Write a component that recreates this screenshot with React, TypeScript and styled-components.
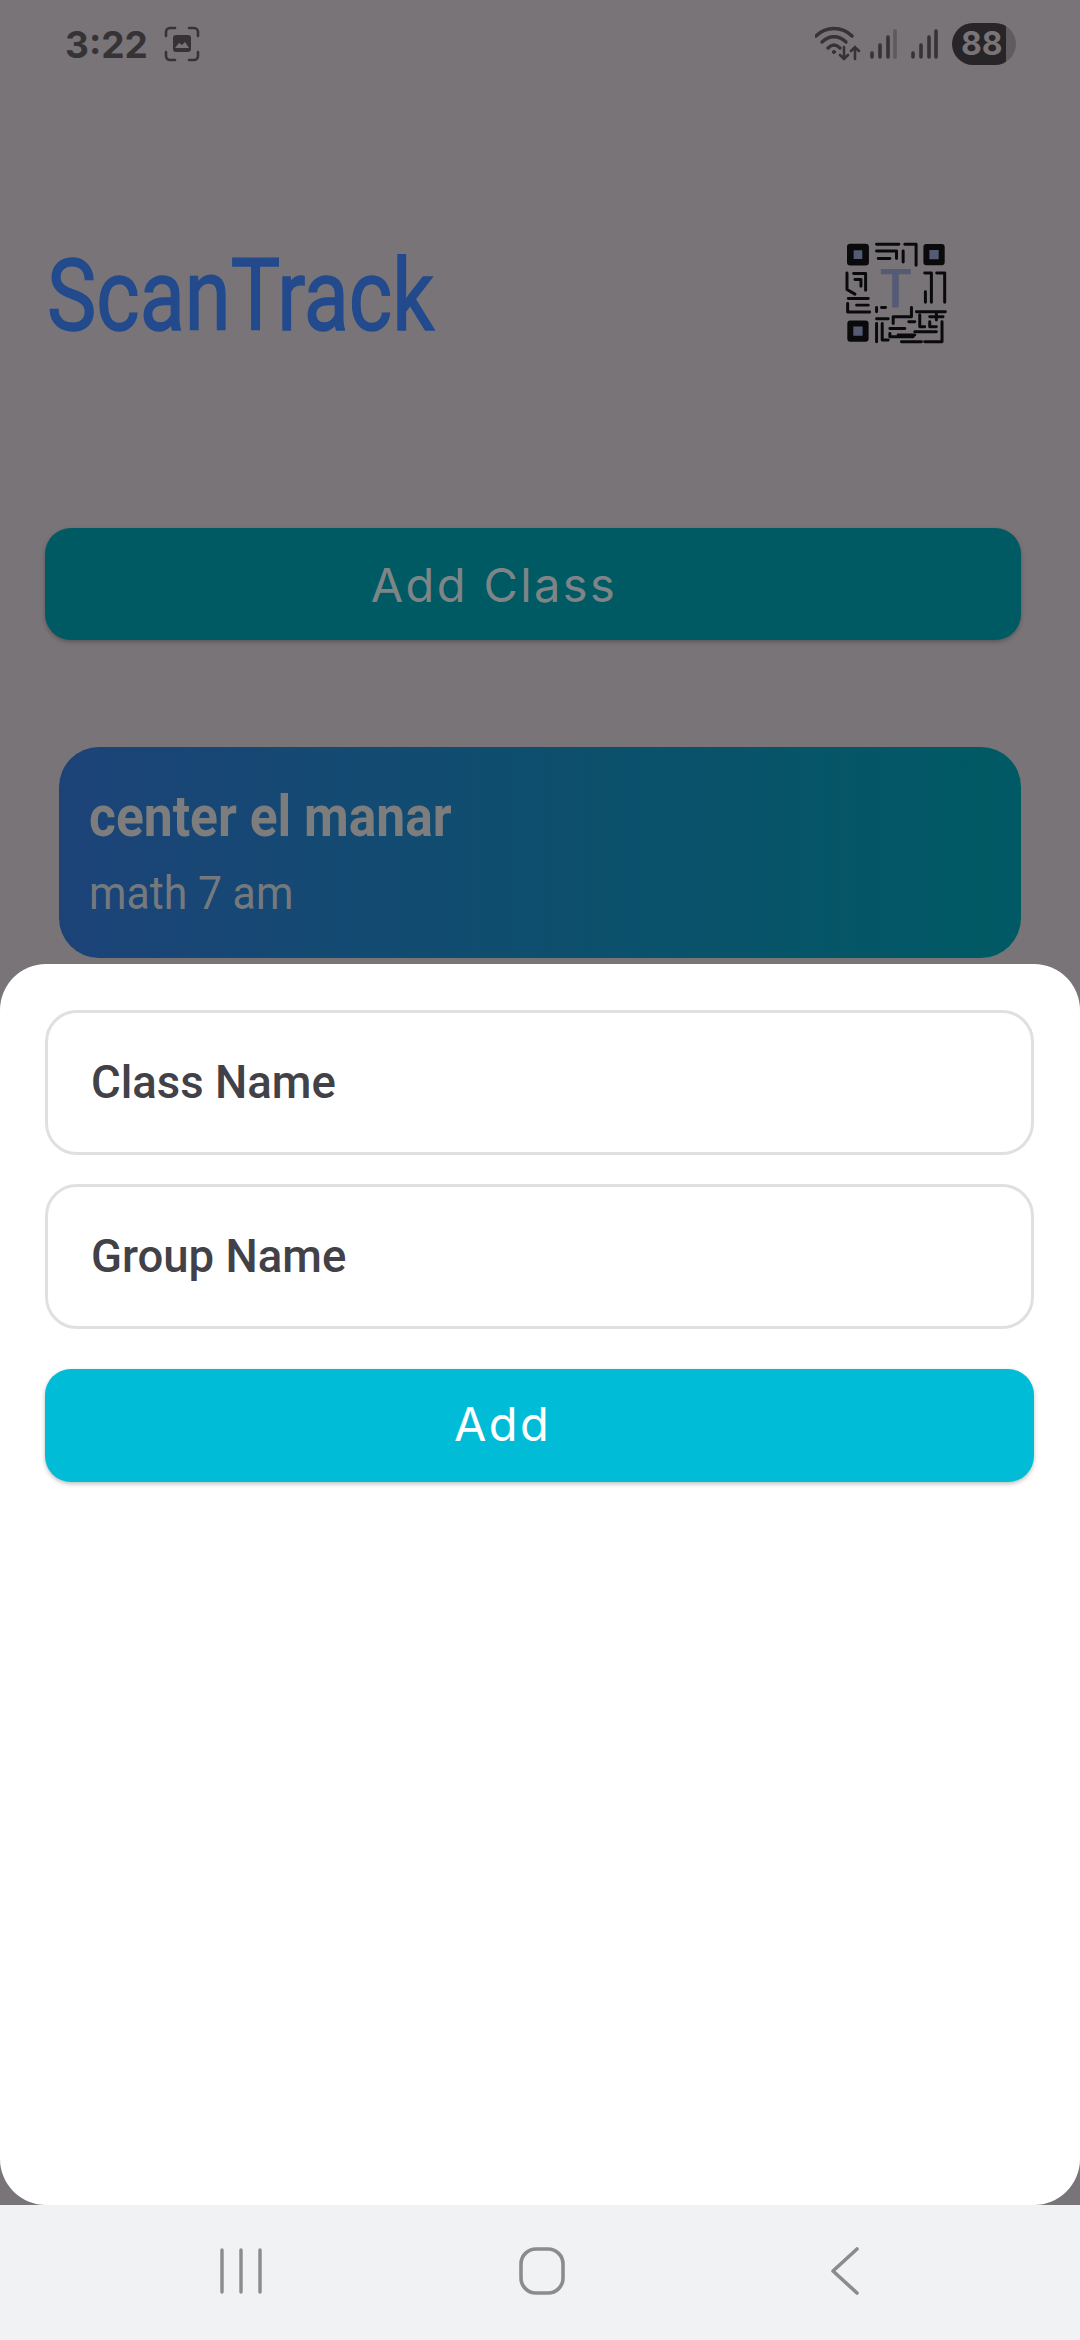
import React from 'react';
import styled, { createGlobalStyle } from 'styled-components';

const GlobalStyle = createGlobalStyle`
  html, body {
    margin: 0;
    padding: 0;
    background: #f1f2f4;
  }
  * {
    box-sizing: border-box;
  }
`;

const Phone = styled.div`
  width: 1080px;
  height: 2340px;
  display: flex;
  flex-direction: column;
  overflow: hidden;
  font-family: Roboto, sans-serif;
`;

const Stage = styled.div`
  position: relative;
  flex: 1;
  overflow: hidden;
  background: #787478;
`;

const StatusBar = styled.div`
  height: 88px;
  padding: 0 64px 0 65px;
  display: flex;
  align-items: center;
  justify-content: space-between;
`;

const StatusGroup = styled.div<{ $gap: number }>`
  display: flex;
  align-items: center;
  gap: ${props => props.$gap}px;
`;

const Clock = styled.span`
  font-family: Inter, sans-serif;
  font-size: 37px;
  font-weight: 700;
  color: #363336;
`;

const Battery = styled.div`
  width: 64px;
  height: 42px;
  border-radius: 21px;
  overflow: hidden;
  background: linear-gradient(90deg, #272527 85%, #5f5b5f 85%);
  color: #787478;
  font-family: Inter, sans-serif;
  font-size: 32px;
  font-weight: 700;
  line-height: 42px;
  padding-left: 9px;
`;

const WifiSvg = styled.svg`
  margin-right: -5px;
`;

const Header = styled.div`
  margin-top: 148px;
  padding: 0 132px 0 47px;
  height: 120px;
  display: flex;
  align-items: center;
  justify-content: space-between;
`;

const Title = styled.h1`
  margin: 0;
  font-size: 100px;
  font-weight: 400;
  line-height: 120px;
  color: #224a8c;
  -webkit-text-stroke: 1.5px #224a8c;
  transform: scaleX(0.83);
  transform-origin: left center;
`;

const QrSvg = styled.svg`
  display: block;
  margin-bottom: 6px;
`;

const AddClassButton = styled.div`
  margin: 172px 59px 0 45px;
  height: 112px;
  border-radius: 26px;
  background: #005a64;
  box-shadow: 0 2px 4px rgba(0, 0, 0, 0.25);
  padding-right: 78px;
  display: flex;
  align-items: center;
  justify-content: center;
  font-family: Inter, sans-serif;
  font-size: 47px;
  letter-spacing: 2.4px;
  color: #7f8587;
`;

const ClassCard = styled.div`
  margin: 107px 59px 0 59px;
  height: 211px;
  border-radius: 40px;
  padding: 39px 30px;
  background: linear-gradient(90deg, #1c4378 0%, #005a64 100%);
`;

const CardTitle = styled.div`
  font-size: 57px;
  font-weight: 700;
  line-height: 62px;
  color: #7d7d7d;
  transform: scaleX(0.905);
  transform-origin: left center;
`;

const CardSubtitle = styled.div`
  margin-top: 18px;
  font-size: 46px;
  line-height: 54px;
  color: #74797d;
  transform: scaleX(0.93);
  transform-origin: left center;
`;

const Sheet = styled.div`
  position: absolute;
  left: 0;
  right: 0;
  top: 964px;
  bottom: 0;
  padding: 46px 46px 0 45px;
  border-radius: 46px;
  background: #fff;
  display: flex;
  flex-direction: column;
`;

const Field = styled.div<{ $gap?: number }>`
  height: 145px;
  margin-top: ${props => props.$gap ?? 0}px;
  padding-left: 43px;
  border: 3px solid #e0e0e2;
  border-radius: 32px;
  display: flex;
  align-items: center;
  font-size: 45.5px;
  font-weight: 500;
  color: #424148;
`;

const AddButton = styled.div`
  margin-top: 40px;
  height: 113px;
  border-radius: 26px;
  background: #00bcd6;
  box-shadow: 0 2px 4px rgba(0, 0, 0, 0.25);
  padding: 0 74px 4px 0;
  display: flex;
  align-items: center;
  justify-content: center;
  font-family: Inter, sans-serif;
  font-size: 47px;
  letter-spacing: 2.4px;
  color: #fff;
`;

const NavBar = styled.div`
  height: 135px;
  flex: none;
  background: #f1f2f4;
  display: flex;
  align-items: center;
  gap: 256px;
  padding: 0 0 4px 219px;
`;

const BackSvg = styled.svg`
  margin-left: 9px;
`;

const ScreenshotIcon = () => (
  <svg width="36" height="36" viewBox="0 0 36 36" fill="none">
    <path
      d="M2 10V6a4 4 0 0 1 4-4h5M25 2h5a4 4 0 0 1 4 4v4M34 26v4a4 4 0 0 1-4 4h-5M11 34H6a4 4 0 0 1-4-4v-4"
      stroke="#363336"
      strokeWidth="2.6"
      strokeLinecap="round"
    />
    <rect x="9" y="9" width="18" height="17" rx="3" fill="#363336" />
    <path d="M11 22l4-5 3 2 3-3 4 6z" fill="#787478" />
  </svg>
);

const WifiIcon = () => (
  <WifiSvg width="46" height="36" viewBox="0 0 46 36" fill="none" stroke="#363336" strokeWidth="3.4" strokeLinecap="round">
    <path d="M1 10C11 0 27 0 37 10" />
    <path d="M7 16C14 9 24 9 31 16" />
    <path d="M13 22C17 18 21 18 25 22" />
    <circle cx="19" cy="26" r="1.6" fill="#363336" strokeWidth="1" />
    <path d="M29 21V33M25 29l4 4 4-4" strokeWidth="2.6" />
    <path d="M40 33V21M36 25l4-4 4 4" strokeWidth="2.6" />
  </WifiSvg>
);

const SignalIcon = ({ faded }: { faded?: boolean }) => (
  <svg width="27" height="30" viewBox="0 0 27 30" fill="none" strokeWidth="3.6" strokeLinecap="round">
    <path d="M2 24V28M10 16V28M18 8V28" stroke="#363336" />
    <path d="M25 2V28" stroke={faded ? '#5d595d' : '#363336'} />
  </svg>
);

const QrCode = () => (
  <QrSvg width="103" height="103" viewBox="70 65 310 310" fill="none" stroke="#0a0a0a" strokeWidth="9" strokeLinecap="round" strokeLinejoin="round">
    <rect x="86" y="80" width="46" height="46" strokeWidth="20" fill="#555b75" />
    <rect x="315" y="80" width="46" height="46" strokeWidth="18" fill="#555b75" />
    <rect x="86" y="310" width="46" height="46" strokeWidth="18" fill="#555b75" />
    <path d="M165 72H232M250 72H284V135M165 92H225V115M170 115H205M245 92V125" />
    <path d="M76 158V208L100 222M96 160H132V210M100 178H118V198M80 235H140M78 250V276H144M105 255H140" />
    <path d="M310 158H330V198M346 158H370V246M312 215V246M330 200V246" />
    <path d="M165 262V275M180 262H192M165 296H200M165 310V365M182 310V360H200M270 262V290H215V310M205 325H250M205 340V350H275M230 345H280" />
    <path d="M285 275H372M345 275V300M295 285V320H310M325 290H365M325 305V320H345M362 305V365H310M280 335H345M240 365H300M262 305H280" />
    <path d="M178 146H268V162H232V262H212V162H178Z" fill="#555b75" stroke="none" />
  </QrSvg>
);

const RecentsIcon = () => (
  <svg width="44" height="46" viewBox="0 0 44 46" fill="none" stroke="#8c8c8e" strokeWidth="3.4" strokeLinecap="round">
    <path d="M3 2V44M22 2V44M41 2V44" />
  </svg>
);

const HomeIcon = () => (
  <svg width="46" height="48" viewBox="0 0 46 48" fill="none">
    <rect x="2" y="2" width="42" height="44" rx="15" stroke="#8c8c8e" strokeWidth="3.6" />
  </svg>
);

const BackIcon = () => (
  <BackSvg width="30" height="48" viewBox="0 0 30 48" fill="none">
    <path d="M27 2L3 24L27 46" stroke="#8c8c8e" strokeWidth="3.6" strokeLinecap="round" strokeLinejoin="round" />
  </BackSvg>
);

export default function App() {
  return (
    <Phone>
      <GlobalStyle />
      <Stage>
        <StatusBar>
          <StatusGroup $gap={16}>
            <Clock>3:22</Clock>
            <ScreenshotIcon />
          </StatusGroup>
          <StatusGroup $gap={14}>
            <WifiIcon />
            <SignalIcon faded />
            <SignalIcon />
            <Battery>88</Battery>
          </StatusGroup>
        </StatusBar>
        <Header>
          <Title>ScanTrack</Title>
          <QrCode />
        </Header>
        <AddClassButton>Add Class</AddClassButton>
        <ClassCard>
          <CardTitle>center el manar</CardTitle>
          <CardSubtitle>math 7 am</CardSubtitle>
        </ClassCard>
        <Sheet>
          <Field>Class Name</Field>
          <Field $gap={29}>Group Name</Field>
          <AddButton>Add</AddButton>
        </Sheet>
      </Stage>
      <NavBar>
        <RecentsIcon />
        <HomeIcon />
        <BackIcon />
      </NavBar>
    </Phone>
  );
}
